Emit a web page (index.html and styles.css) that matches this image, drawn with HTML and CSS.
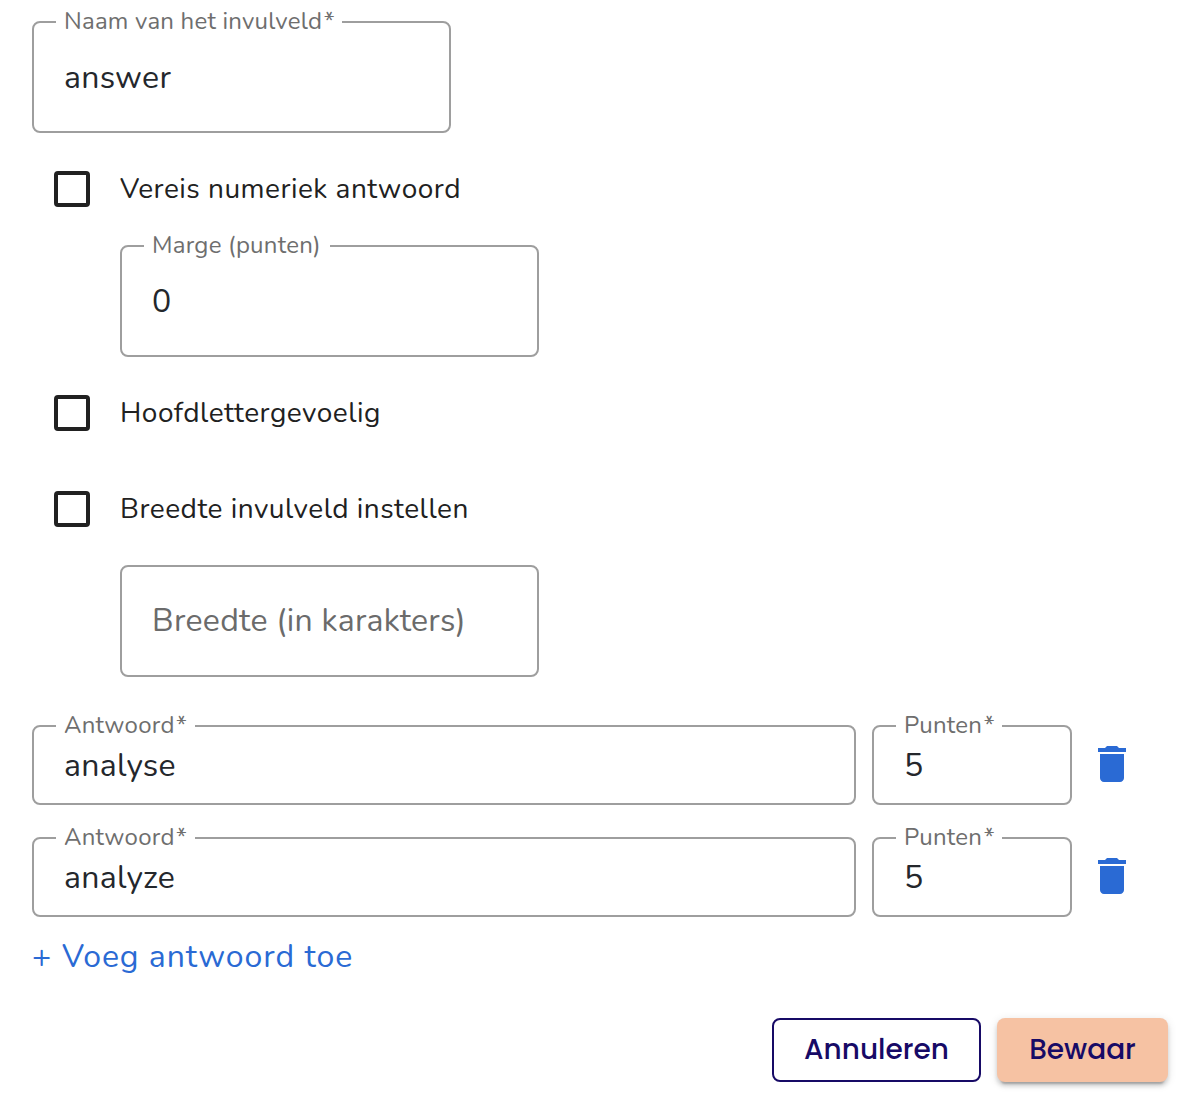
FILE: index.html
```html
<!DOCTYPE html>
<html lang="nl">
<head>
<meta charset="utf-8">
<title>Invulveld</title>
<link rel="stylesheet" href="styles.css">
</head>
<body>
<form class="form">
  <fieldset class="field field--tall">
    <legend class="legend legend--name">Naam van het invulveld<span class="star">*</span></legend>
    <input class="input" type="text" value="answer">
  </fieldset>

  <label class="check check--numeric"><span class="box"></span><span class="check-text">Vereis numeriek antwoord</span></label>
  <fieldset class="field field--tall field--indent field--margin">
    <legend class="legend legend--margin">Marge (punten)</legend>
    <input class="input" type="text" value="0">
  </fieldset>

  <label class="check check--case"><span class="box"></span><span class="check-text">Hoofdlettergevoelig</span></label>
  <label class="check check--width"><span class="box"></span><span class="check-text">Breedte invulveld instellen</span></label>
  <div class="field field--plain field--indent">
    <input class="input" type="text" placeholder="Breedte (in karakters)">
  </div>

  <div class="answers">
    <div class="answer">
      <fieldset class="field field--answer">
        <legend class="legend legend--answer">Antwoord<span class="star">*</span></legend>
        <input class="input" type="text" value="analyse">
      </fieldset>
      <fieldset class="field field--points">
        <legend class="legend legend--points">Punten<span class="star">*</span></legend>
        <input class="input" type="text" value="5">
      </fieldset>
      <svg class="trash" viewBox="0 0 24 24"><path d="M6 19c0 1.1.9 2 2 2h8c1.1 0 2-.9 2-2V7H6v12zM19 4h-3.500l-1-1h-5l-1 1H5v2h14V4z"/></svg>
    </div>
    <div class="answer">
      <fieldset class="field field--answer">
        <legend class="legend legend--answer">Antwoord<span class="star">*</span></legend>
        <input class="input" type="text" value="analyze">
      </fieldset>
      <fieldset class="field field--points">
        <legend class="legend legend--points">Punten<span class="star">*</span></legend>
        <input class="input" type="text" value="5">
      </fieldset>
      <svg class="trash" viewBox="0 0 24 24"><path d="M6 19c0 1.1.9 2 2 2h8c1.1 0 2-.9 2-2V7H6v12zM19 4h-3.500l-1-1h-5l-1 1H5v2h14V4z"/></svg>
    </div>
  </div>

  <a class="add"><span class="plus">+</span><span>Voeg antwoord toe</span></a>

  <div class="actions">
    <button class="btn btn--outline" type="button">Annuleren</button>
    <button class="btn btn--primary" type="button">Bewaar</button>
  </div>
</form>
</body>
</html>
```
FILE: styles.css
```css
* { box-sizing: border-box; }
body {
  margin: 0;
  background: #fff;
  color: #212121;
  font-family: Nunito, Lato, sans-serif;
}
.form {
  display: flex;
  flex-direction: column;
  align-items: flex-start;
  height: 1094px;
  padding: 6px 12px 0 32px;
  overflow: hidden;
}
.field {
  width: 419px;
  min-width: 0;
  margin: 0;
  padding: 0;
  border: 2px solid #9e9e9e;
  border-radius: 8px;
}
.field--tall { height: 127px; }
.field--tall .input { margin-top: 20px; }
.field--indent { margin-left: 88px; }
.field--margin { margin-top: 23px; }
.field--plain {
  height: 112px;
  margin-top: 38px;
  padding-top: 34px;
}
.field--answer { width: 824px; height: 95px; }
.field--points { width: 200px; height: 95px; }
.field--answer .input,
.field--points .input { margin-top: 4px; }
.legend {
  height: 32px;
  margin-left: 22px;
  padding: 0 0 0 8px;
  color: #6e6e6e;
  font-size: 24px;
  line-height: 30px;
  letter-spacing: .225px;
  white-space: nowrap;
}
.legend--name { width: 286px; }
.legend--margin { width: 186px; }
.legend--answer { width: 139px; }
.legend--points { width: 106px; }
.star { margin-left: 1.5px; }
.input {
  display: block;
  width: 100%;
  height: 40px;
  padding: 0 30px;
  border: 0;
  outline: 0;
  background: none;
  color: #24272c;
  font: 32px/40px Nunito, Lato, sans-serif;
  letter-spacing: .3px;
}
.input::placeholder { color: #6b6b6b; opacity: 1; }
.check {
  display: flex;
  align-items: center;
  gap: 30px;
  height: 36px;
  padding-left: 22px;
}
.check--numeric { margin-top: 38px; }
.check--case { margin-top: 38px; }
.check--width { margin-top: 60px; }
.box {
  width: 36px;
  height: 36px;
  border: 4px solid #212121;
  border-radius: 4px;
}
.check-text {
  height: 36px;
  font-size: 28px;
  line-height: 36px;
  letter-spacing: .5px;
  white-space: nowrap;
}
.answers {
  display: flex;
  flex-direction: column;
  gap: 17px;
  margin-top: 33px;
}
.answer { display: flex; gap: 16px; }
.trash {
  width: 48px;
  height: 48px;
  margin-top: 30px;
  fill: #2a6ad4;
}
.add {
  display: flex;
  height: 40px;
  margin-top: 19px;
  color: #2a6ad4;
  font-size: 32px;
  line-height: 42px;
  letter-spacing: .96px;
  white-space: nowrap;
}
.plus { width: 30px; }
.actions {
  display: flex;
  align-self: flex-end;
  gap: 16px;
  margin-top: 42px;
}
.btn {
  height: 64px;
  padding: 0;
  border: 0;
  border-radius: 8px;
  color: #170a66;
  font: 500 28px/60px Poppins, Inter, sans-serif;
}
.btn--outline {
  width: 209px;
  border: 2px solid #170a66;
  background: #fff;
}
.btn--primary {
  width: 171px;
  background: #f6c2a3;
  box-shadow: 0 6px 2px -4px rgba(0,0,0,.2), 0 4px 4px rgba(0,0,0,.14), 0 2px 10px rgba(0,0,0,.12);
}
```
